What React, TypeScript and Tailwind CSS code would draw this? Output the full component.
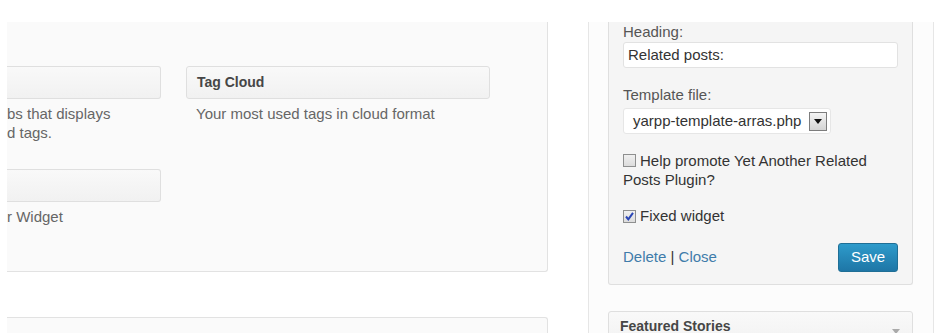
import React from 'react'

const font = { fontFamily: '"Liberation Sans", Arial, sans-serif' }

function Checkbox({ checked }: { checked?: boolean }) {
  return (
    <span className="inline-flex items-center justify-center w-[13px] h-[13px] mr-[4px] border border-[#8e8f8f] bg-gradient-to-b from-[#f0f0f0] to-[#dcdcdc] align-[-1px] shrink-0">
      {checked && (
        <svg width="11" height="11" viewBox="0 0 11 11">
          <path d="M2 5.5 L4.3 8.3 L9 1.8" fill="none" stroke="#2a46b5" strokeWidth="2" />
        </svg>
      )}
    </span>
  )
}

export default function App() {
  return (
    <div style={font} className="w-[939px] h-[333px] bg-white overflow-hidden text-[15px]">
      <div className="flex pt-[22px] h-full">
        {/* available widgets area */}
        <div className="w-[541px] ml-[7px] flex flex-col">
          <div className="h-[250px] bg-[#fafafa] border-r border-b border-[#e2e2e2] rounded-br-[3px] overflow-hidden">
            <div className="flex gap-[25px] pt-[44px]">
              <div className="w-[154px] flex flex-col">
                <div className="h-[33px] border border-l-0 border-[#dfdfdf] rounded-r-[3px] bg-gradient-to-b from-[#f9f9f9] to-[#f1f1f1]" />
                <p className="text-[#666] leading-[19px] mt-[5px] whitespace-nowrap">bs that displays</p>
                <p className="text-[#666] leading-[19px] whitespace-nowrap">d tags.</p>
                <div className="h-[33px] mt-[27px] border border-l-0 border-[#dfdfdf] rounded-r-[3px] bg-gradient-to-b from-[#f9f9f9] to-[#f1f1f1]" />
                <p className="text-[#666] leading-[19px] mt-[5px] whitespace-nowrap">r Widget</p>
              </div>
              <div className="w-[304px] flex flex-col">
                <div className="h-[33px] border border-[#dfdfdf] rounded-[3px] bg-gradient-to-b from-[#f9f9f9] to-[#f1f1f1] flex items-center pl-[10px] font-bold text-[#464646] text-[14px]">
                  Tag Cloud
                </div>
                <p className="text-[#666] leading-[19px] mt-[5px] pl-[10px]">Your most used tags in cloud format</p>
              </div>
            </div>
          </div>
          <div className="mt-[45px] flex-1 bg-[#fafafa] border-t border-r border-[#e2e2e2] rounded-tr-[3px]" />
        </div>

        {/* sidebar */}
        <div className="ml-[40px] w-[346px] bg-[#fcfcfc] border-l border-r border-[#e6e6e6] pl-[19px] pr-[20px]">
          <div className="bg-[#f5f5f5] border border-t-0 border-[#dfdfdf] rounded-b-[3px] px-[14px] pb-[12px] text-[#333]">
            <div className="leading-[19px] text-[#555]">Heading:</div>
            <div className="mt-px h-[26px] bg-white border border-[#e2e2e2] rounded-[3px] flex items-center pl-[4px] text-[#333]">
              Related posts:
            </div>
            <div className="mt-[17px] leading-[19px] text-[#555]">Template file:</div>
            <div className="mt-[4px] w-[208px] h-[26px] bg-white border border-[#e6e6e6] rounded-[3px] flex items-center pl-[9px] pr-[3px] justify-between">
              <span className="text-[#333] whitespace-nowrap">yarpp-template-arras.php</span>
              <span className="w-[18px] h-[19px] border border-[#7d7d7d] bg-gradient-to-b from-[#f4f4f4] to-[#d4d4d4] flex items-center justify-center shrink-0">
                <svg width="8" height="5" viewBox="0 0 8 5">
                  <path d="M0 0 H8 L4 5 Z" fill="#111" />
                </svg>
              </span>
            </div>
            <div className="mt-[17px] leading-[19px] text-[#333]">
              <Checkbox />
              Help promote Yet Another Related Posts Plugin?
            </div>
            <div className="mt-[17px] leading-[19px] text-[#333]">
              <Checkbox checked />
              Fixed widget
            </div>
            <div className="mt-[18px] flex items-center justify-between">
              <span>
                <span className="text-[#3f7caa]">Delete</span>
                <span className="text-[#333]"> | </span>
                <span className="text-[#3f7caa]">Close</span>
              </span>
              <button className="w-[60px] h-[29px] rounded-[3px] border border-[#1f6f96] bg-gradient-to-b from-[#2e9bcb] to-[#1e76a6] text-white text-[15px] flex items-center justify-center">
                Save
              </button>
            </div>
          </div>
          <div className="mt-[26px] h-[40px] border border-[#dfdfdf] rounded-[3px] bg-gradient-to-b from-[#f9f9f9] to-[#f1f1f1] flex items-start justify-between pl-[11px] pr-[12px] pt-[5px]">
            <span className="font-bold text-[#464646] text-[14px] leading-[19px]">Featured Stories</span>
            <svg width="8" height="5" viewBox="0 0 8 5" className="mt-[12px]">
              <path d="M0 0 H8 L4 5 Z" fill="#aaa" />
            </svg>
          </div>
        </div>
      </div>
    </div>
  )
}
